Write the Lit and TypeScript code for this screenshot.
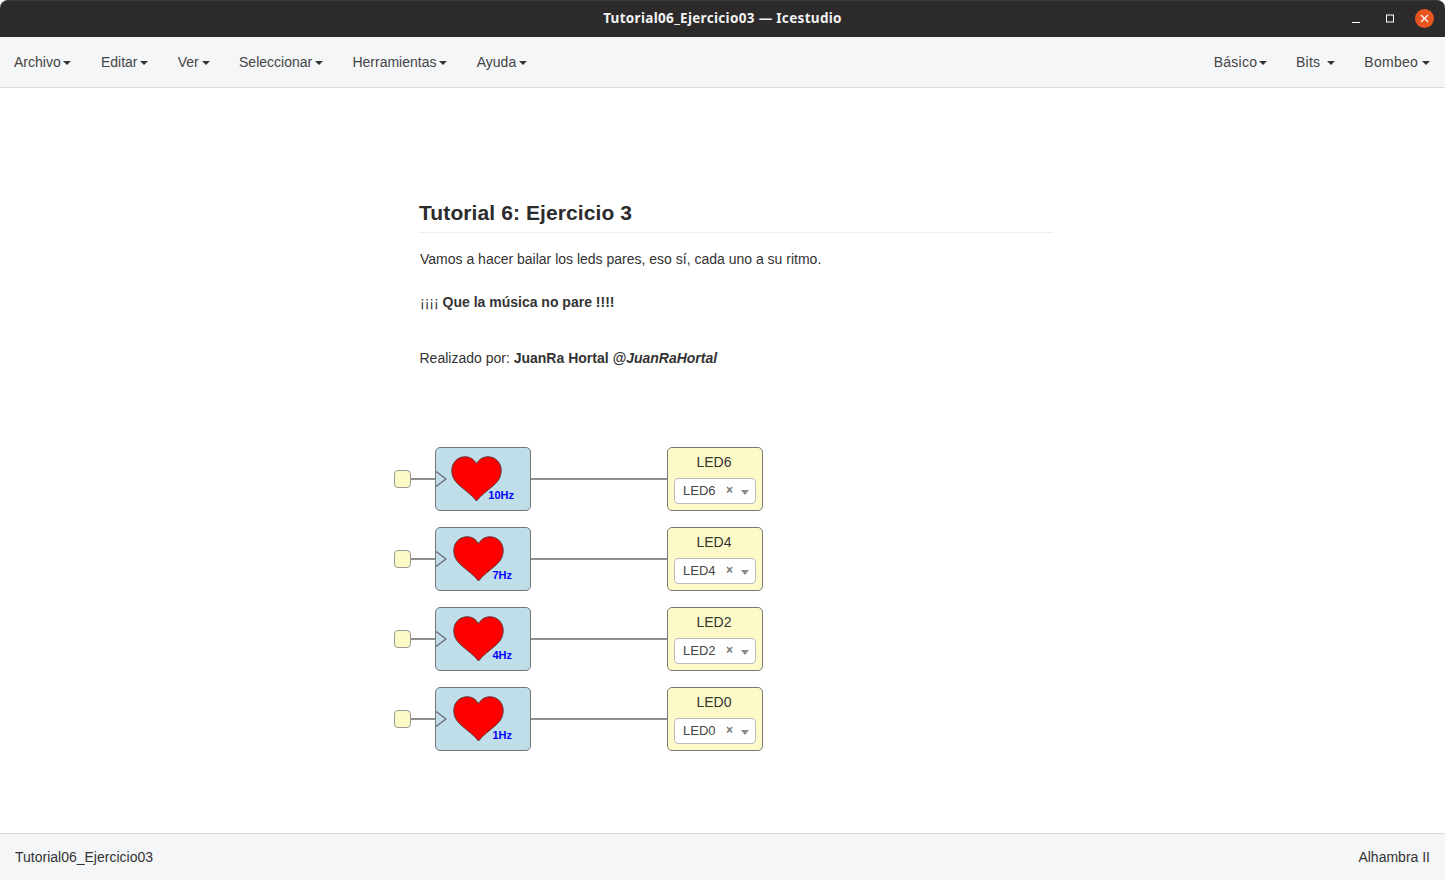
import { LitElement, html, css, svg } from "lit";
import { customElement } from "lit/decorators.js";

const LEFT = ["Archivo", "Editar", "Ver", "Seleccionar", "Herramientas", "Ayuda"];
const RIGHT = [
  { t: "Básico", cls: "tight" },
  { t: "Bits", cls: "wide" },
  { t: "Bombeo", cls: "mid" },
];
const ROWS = [
  { hz: "10Hz", led: "LED6", dx: 0, right: 16 },
  { hz: "7Hz", led: "LED4", dx: 2, right: 18 },
  { hz: "4Hz", led: "LED2", dx: 2, right: 18 },
  { hz: "1Hz", led: "LED0", dx: 2, right: 18 },
];

const heart = svg`<path d="M25.500 45 C21 39 14 34.500 8 29 C3 24.500 .8 20 .8 14.500 C.8 6.500 6.800 .8 14 .8 C19 .8 23.500 3.500 25.500 8 C27.500 3.500 32 .8 37 .8 C44.200 .8 50.200 6.500 50.200 14.500 C50.200 20 48 24.500 43 29 C37 34.500 30 39 25.500 45 Z" fill="#ff0000" stroke="#5a3a3a" stroke-width="1"/>`;

@customElement("app-root")
export class AppRoot extends LitElement {
  static styles = css`
    :host {
      display: flex;
      flex-direction: column;
      height: 100vh;
      font-family: "Liberation Sans", Arial, sans-serif;
      font-size: 14px;
      color: #333;
      background: #fff;
    }
    .titlebar {
      height: 37px;
      flex: none;
      box-sizing: border-box;
      background: #2c2a2a;
      border-radius: 8px 8px 0 0;
      border-top: 1px solid #3c3a3a;
      display: grid;
      grid-template-columns: 1fr auto 1fr;
      align-items: center;
      color: #f2f2f2;
    }
    .title {
      grid-column: 2;
      font-family: "Noto Sans", "Open Sans", sans-serif;
      font-size: 13.500px;
      font-weight: 700;
      letter-spacing: .32px;
      margin-top: -2px;
    }
    .winbtns {
      grid-column: 3;
      justify-self: end;
      display: flex;
      align-items: center;
      padding-right: 11px;
      margin-top: -1px;
    }
    .winbtns svg { display: block; }
    .min { margin-right: 25px; }
    .max { margin-right: 20px; }
    .navbar {
      height: 51px;
      flex: none;
      box-sizing: border-box;
      background: #f5f6f8;
      border-bottom: 1px solid #d9dadc;
      display: flex;
      justify-content: space-between;
      align-items: center;
      padding: 0 15px 1px 14px;
      color: #444;
    }
    .menu { display: flex; gap: 29.500px; }
    .right { letter-spacing: .25px; }
    .item { display: flex; align-items: center; }
    .caret {
      width: 0;
      height: 0;
      margin-left: 2.750px;
      margin-top: 2px;
      border-left: 4px solid transparent;
      border-right: 4px solid transparent;
      border-top: 4px solid #333;
    }
    .caret.tight { margin-left: 1.250px; }
    .caret.mid { margin-left: 4px; }
    .caret.wide { margin-left: 6.500px; }
    main {
      flex: 1;
      min-height: 0;
      box-sizing: border-box;
      padding: 112px 0 0 394px;
    }
    .note { margin-left: 25px; width: 634px; }
    h1 {
      margin: 0;
      font-size: 21px;
      font-weight: 700;
      letter-spacing: .1px;
      line-height: 25px;
      padding-bottom: 7px;
      border-bottom: 1px solid #eee;
      color: #2b2b2b;
    }
    p { margin: 0; line-height: 20px; }
    .p1 { margin-top: 16px; padding-left: 1px; }
    .p2 { margin-top: 23px; padding-left: 1px; }
    .p3 { margin-top: 36px; padding-left: .5px; }
    .diagram {
      margin-top: 79px;
      display: flex;
      flex-direction: column;
      gap: 16px;
    }
    .row { display: flex; align-items: center; height: 64px; }
    .pin {
      box-sizing: border-box;
      width: 17px;
      height: 18px;
      background: #fcfbc8;
      border: 1px solid #999;
      border-radius: 4px;
    }
    .wire { height: 2px; background: #8f8f8f; }
    .wire.in { width: 24px; }
    .wire.out { width: 136px; }
    .block {
      box-sizing: border-box;
      width: 96px;
      height: 64px;
      border: 1px solid #777;
      border-radius: 5px;
      position: relative;
    }
    .code { background: #c0deea; }
    .tri { position: absolute; left: 0; top: 23px; display: block; }
    .heart { position: absolute; top: 8px; display: block; }
    .hz {
      position: absolute;
      bottom: 9px;
      font-size: 11px;
      line-height: 12px;
      font-weight: 700;
      color: #0000ff;
    }
    .led {
      background: #fcfbc8;
      display: flex;
      flex-direction: column;
      align-items: center;
      padding: 4px 6px 0;
      color: #333;
    }
    .led-name { line-height: 20px; height: 26px; margin-left: -2px; }
    .select {
      box-sizing: border-box;
      width: 82px;
      height: 26px;
      background: #fff;
      border: 1px solid #bbb;
      border-radius: 4px;
      display: flex;
      align-items: center;
      padding: 0 0 2px 8px;
      font-size: 13px;
      color: #444;
    }
    .led-val { flex: 1; }
    .clear { color: #777; font-size: 12px; font-weight: 700; margin-right: 8px; }
    .arrow {
      width: 0;
      height: 0;
      margin: 4px 6px 0 0;
      border-left: 4px solid transparent;
      border-right: 4px solid transparent;
      border-top: 5px solid #888;
    }
    footer {
      height: 47px;
      flex: none;
      box-sizing: border-box;
      background: #f5f6f8;
      border-top: 1px solid #d9dadc;
      display: flex;
      justify-content: space-between;
      align-items: center;
      padding: 0 15px;
      color: #333;
    }
  `;

  render() {
    return html`
      <header class="titlebar">
        <div class="title">Tutorial06_Ejercicio03 — Icestudio</div>
        <div class="winbtns">
          <svg class="min" width="9" height="10" viewBox="0 0 9 10"><rect x="0" y="8" width="8" height="1" fill="#fff"/></svg>
          <svg class="max" width="9" height="10" viewBox="0 0 9 10"><rect x=".5" y="1" width="7" height="7" fill="none" stroke="#fff"/></svg>
          <svg width="19" height="19" viewBox="0 0 19 19"><circle cx="9.500" cy="9.500" r="9.500" fill="#e95420"/><path d="M6 6 L13 13 M13 6 L6 13" stroke="#fff" stroke-width="1.200"/></svg>
        </div>
      </header>
      <nav class="navbar">
        <div class="menu">
          ${LEFT.map((t) => html`<div class="item">${t}<span class="caret"></span></div>`)}
        </div>
        <div class="menu right">
          ${RIGHT.map((r) => html`<div class="item">${r.t}<span class="caret ${r.cls}"></span></div>`)}
        </div>
      </nav>
      <main>
        <section class="note">
          <h1>Tutorial 6: Ejercicio 3</h1>
          <p class="p1">Vamos a hacer bailar los leds pares, eso sí, cada uno a su ritmo.</p>
          <p class="p2">¡¡¡¡ <strong>Que la música no pare !!!!</strong></p>
          <p class="p3">Realizado por: <strong>JuanRa Hortal</strong> <strong><em>@JuanRaHortal</em></strong></p>
        </section>
        <section class="diagram">
          ${ROWS.map(
            (r) => html`
              <div class="row">
                <div class="pin"></div>
                <div class="wire in"></div>
                <div class="block code">
                  <svg class="tri" width="11" height="16" viewBox="0 0 11 16"><path d="M0 .5 L10 8 L0 15.500" fill="none" stroke="#666" stroke-width="1.200"/></svg>
                  <svg class="heart" style="left:${15 + r.dx}px" width="51" height="46" viewBox="0 0 51 46">${heart}</svg>
                  <span class="hz" style="right:${r.right}px">${r.hz}</span>
                </div>
                <div class="wire out"></div>
                <div class="block led">
                  <div class="led-name">${r.led}</div>
                  <div class="select">
                    <span class="led-val">${r.led}</span>
                    <span class="clear">×</span>
                    <span class="arrow"></span>
                  </div>
                </div>
              </div>
            `
          )}
        </section>
      </main>
      <footer>
        <span>Tutorial06_Ejercicio03</span>
        <span>Alhambra II</span>
      </footer>
    `;
  }
}
